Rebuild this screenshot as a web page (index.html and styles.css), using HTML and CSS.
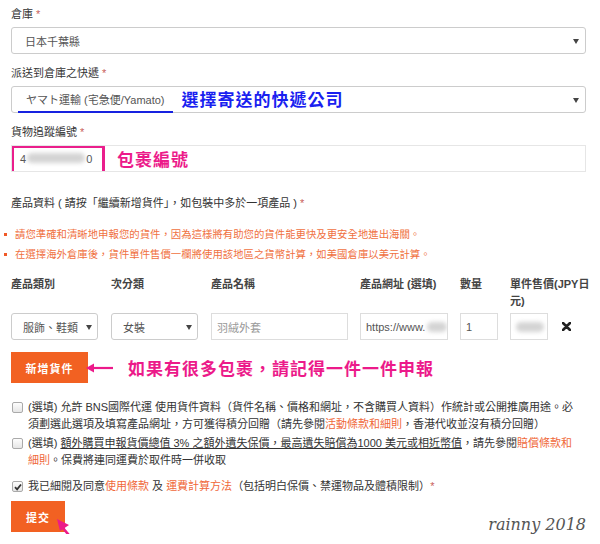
FILE: index.html
```html
<!DOCTYPE html>
<html lang="zh-Hant">
<head>
    <meta charset="UTF-8">
    <meta name="viewport" content="width=device-width, initial-scale=1.0">
    <title>新增貨件</title>
    <link rel="stylesheet" href="styles.css">
</head>
<body>
    <form class="order-form">
        <div class="field">
            <div class="field-label">倉庫 <span class="req">*</span></div>
            <div class="select-box"><span class="select-text">日本千葉縣</span></div>
        </div>

        <div class="field">
            <div class="field-label">派送到倉庫之快遞 <span class="req">*</span></div>
            <div class="select-box courier">
                <span class="courier-name">ヤマト運輸 (宅急便/Yamato)</span>
                <span class="note note-blue">選擇寄送的快遞公司</span>
            </div>
        </div>

        <div class="field">
            <div class="field-label">貨物追蹤編號 <span class="req">*</span></div>
            <div class="text-box tracking">
                <span class="tracking-no">4<span class="blur blur-tracking"></span>0</span>
                <span class="note note-pink">包裹編號</span>
                <span class="mark-box"></span>
            </div>
        </div>

        <div class="products">
            <div class="products-title">產品資料 ( 請按「繼續新增貨件」，如包裝中多於一項產品 ) <span class="req">*</span></div>
            <ul class="tips">
                <li>請您準確和清晰地申報您的貨件，因為這樣將有助您的貨件能更快及更安全地進出海關。</li>
                <li>在選擇海外倉庫後，貨件單件售價一欄將使用該地區之貨幣計算，如美國倉庫以美元計算。</li>
            </ul>

            <div class="items">
                <div class="col-head">產品類別</div>
                <div class="col-head">次分類</div>
                <div class="col-head">產品名稱</div>
                <div class="col-head">產品網址 (選填)</div>
                <div class="col-head">數量</div>
                <div class="col-head price-head">單件售價(JPY日<br>元)</div>

                <div class="select-box small w87"><span class="select-text">服飾、鞋類</span></div>
                <div class="select-box small w87"><span class="select-text">女裝</span></div>
                <div class="text-box w137 placeholder">羽絨外套</div>
                <div class="text-box w88 url">https://www.<span class="blur blur-url"></span></div>
                <div class="text-box w38">1</div>
                <div class="text-box w38"><span class="blur blur-price"></span></div>
                <div class="delete">
                    <svg width="9" height="9" viewBox="0 0 9 9"><path d="M1 1L8 8M8 1L1 8" stroke="#222" stroke-width="2.6" stroke-linecap="round"/></svg>
                </div>
            </div>

            <div class="add-row">
                <button type="button" class="btn btn-add">新增貨件</button>
                <svg class="arrow-left" width="30" height="12" viewBox="0 0 30 12">
                    <path d="M28 6H6" stroke="#ec1a8a" stroke-width="2.2"/>
                    <path d="M1 6L9 1.5V10.5Z" fill="#ec1a8a"/>
                </svg>
                <span class="note note-pink">如果有很多包裹，請記得一件一件申報</span>
            </div>
        </div>

        <div class="checks">
            <div class="check-row">
                <span class="check"></span>
                <p>(選填) 允許 BNS國際代運 使用貨件資料（貨件名稱、價格和網址，不含購買人資料）作統計或公開推廣用途。必<br>須劃選此選項及填寫產品網址，方可獲得積分回贈（請先參閱<a href="#">活動條款和細則</a>，香港代收並沒有積分回贈）</p>
            </div>
            <div class="check-row">
                <span class="check"></span>
                <p>(選填) <u>額外購買申報貨價總值 3% 之額外遺失保價，最高遺失賠償為1000 美元或相近幣值</u>，請先參閱<a href="#">賠償條款和<br>細則</a>。保費將連同運費於取件時一併收取</p>
            </div>
            <div class="check-row agree">
                <span class="check checked">
                    <svg width="8" height="8" viewBox="0 0 8 8"><path d="M1 4.2L3.1 6.3L7 1.5" stroke="#333" stroke-width="1.8" fill="none"/></svg>
                </span>
                <p>我已細閱及同意<a href="#">使用條款</a> 及 <a href="#">運費計算方法</a>（包括明白保價、禁運物品及體積限制）<span class="req">*</span></p>
            </div>
        </div>

        <div class="submit-row">
            <div class="submit-wrap">
                <button type="submit" class="btn btn-submit">提交</button>
                <svg class="arrow-up" width="26" height="30" viewBox="0 0 26 30">
                    <path d="M22 28L8 11" stroke="#ec1a8a" stroke-width="2.6"/>
                    <path d="M2 2L14 8L5 14Z" fill="#ec1a8a"/>
                </svg>
            </div>
            <span class="signature">rainny 2018</span>
        </div>
    </form>
</body>
</html>
```

FILE: styles.css
```css
* {
    margin: 0;
    padding: 0;
    box-sizing: border-box;
}

body {
    font-family: "Liberation Sans", "Noto Sans CJK TC", sans-serif;
    font-size: 11px;
    color: #333;
    background: #fff;
    padding: 6px 14px 0 11px;
}

.req {
    color: #c9605a;
}

.field {
    margin-bottom: 11px;
}

.field-label {
    line-height: 16px;
    margin-bottom: 5px;
}

/* select / input look */
.select-box {
    position: relative;
    display: flex;
    align-items: center;
    height: 27px;
    border: 1px solid #ccc;
    border-radius: 3px;
    padding-left: 13px;
    color: #555;
}

.select-box::after {
    content: "";
    position: absolute;
    right: 6px;
    top: 11px;
    border-left: 3px solid transparent;
    border-right: 3px solid transparent;
    border-top: 5px solid #444;
}

.select-box.small {
    padding-left: 11px;
    padding-right: 14px;
    overflow: hidden;
}

.select-box.small::after {
    right: 5px;
}

.select-text {
    white-space: nowrap;
}

.text-box {
    position: relative;
    display: flex;
    align-items: center;
    height: 27px;
    border: 1px solid #ddd;
    padding-left: 5px;
    color: #555;
    white-space: nowrap;
    overflow: hidden;
}

.placeholder {
    color: #999;
}

.w87 { width: 87px; }
.w88 { width: 88px; }
.w137 { width: 137px; }
.w38 { width: 38px; }

.blur {
    display: inline-block;
    height: 10px;
    background: #d4d4d4;
    border-radius: 5px;
    filter: blur(2px);
}

.blur-tracking {
    width: 58px;
    margin: 0 1px;
}

.blur-url {
    width: 24px;
    margin-left: 2px;
}

.blur-price {
    width: 28px;
}

/* courier select with note */
.courier {
    padding-left: 6px;
    align-items: stretch;
}

.courier-name {
    display: flex;
    align-items: center;
    padding: 0 8px;
    border-bottom: 2px solid #1622e0;
    margin-bottom: -1px;
}

.note {
    font-size: 17px;
    font-weight: bold;
    letter-spacing: 1px;
    white-space: nowrap;
}

.note-blue {
    color: #1a1ff0;
    align-self: flex-end;
    margin-left: 9px;
    line-height: 22px;
}

.note-pink {
    color: #ec1a8a;
}

.tracking {
    border-color: #e6e6e6;
    padding-left: 8px;
}

.tracking-no {
    width: 97px;
}

.mark-box {
    position: absolute;
    left: -1px;
    top: -1px;
    width: 94px;
    height: 31px;
    border: 3px solid #ea1e8c;
    border-radius: 2px;
}

/* products */
.products {
    margin-top: 23px;
}

.products-title {
    line-height: 16px;
}

.tips {
    list-style: none;
    margin: 14px 0 11px 4px;
    color: #f0713f;
    font-size: 10.4px;
}

.tips li {
    position: relative;
    line-height: 20px;
}

.tips li::before {
    content: "";
    position: absolute;
    left: -11px;
    top: 8px;
    width: 3px;
    height: 3px;
    background: #f05a28;
}

.items {
    display: grid;
    grid-template-columns: 100px 100px 149px 100px 50px 38px 1fr;
    row-gap: 3px;
}

.col-head {
    font-weight: bold;
    color: #444;
    line-height: 17px;
    align-self: start;
}

.price-head {
    grid-column: span 2;
    white-space: nowrap;
}

.delete {
    display: flex;
    align-items: center;
    padding-left: 14px;
}

.btn {
    border: none;
    background: #f26122;
    color: #fff;
    font-family: inherit;
    font-size: 11px;
    font-weight: bold;
    letter-spacing: 1px;
    height: 31px;
    cursor: pointer;
}

.add-row {
    display: flex;
    align-items: center;
    margin-top: 12px;
}

.btn-add {
    width: 77px;
}

.arrow-left {
    margin-left: -3px;
    margin-right: 13px;
}

/* checkboxes */
.checks {
    margin-top: 16px;
}

.check-row {
    display: flex;
    align-items: flex-start;
    margin-bottom: 2px;
}

.check-row p {
    line-height: 17px;
}

.check-row a {
    color: #f0683a;
    text-decoration: none;
}

.check {
    flex: none;
    display: flex;
    align-items: center;
    justify-content: center;
    width: 11px;
    height: 11px;
    margin: 3px 5px 0 1px;
    border: 1px solid #aaa;
    border-radius: 2px;
    background: linear-gradient(#fdfdfd, #e6e6e6);
}

.agree {
    margin-top: 9px;
}

.submit-row {
    display: flex;
    justify-content: space-between;
    align-items: flex-start;
    margin-top: 6px;
}

.submit-wrap {
    position: relative;
}

.btn-submit {
    width: 54px;
}

.arrow-up {
    position: absolute;
    left: 44px;
    top: 16px;
}

.signature {
    font-family: "DejaVu Serif", serif;
    font-style: italic;
    font-size: 16px;
    color: #555;
    margin-top: 14px;
}
```
